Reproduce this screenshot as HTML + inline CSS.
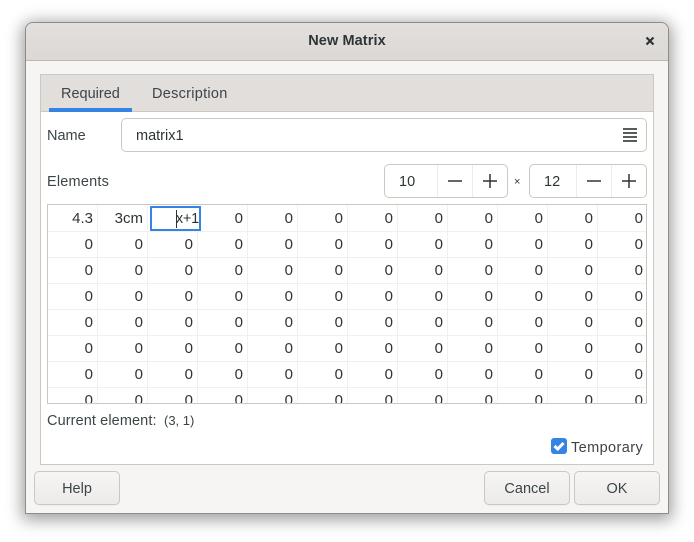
<!DOCTYPE html>
<html><head><meta charset="utf-8"><style>
html,body{margin:0;padding:0;background:#fff}
body{width:694px;height:542px;position:relative;overflow:hidden;font-family:"Liberation Sans",sans-serif;font-size:14.5px;color:#2e3436}
.a{position:absolute;box-sizing:border-box}
.t{position:absolute;white-space:nowrap;line-height:18px}
.btn{position:absolute;box-sizing:border-box;border:1px solid #cdc7c2;border-radius:5px;background:linear-gradient(#f6f5f4,#ecebe9);text-align:center;line-height:34px;color:#3d4548;box-shadow:0 1px 0 rgba(0,0,0,.03)}
.in{position:absolute;box-sizing:border-box;border:1px solid #cdc7c2;border-radius:5px;background:#fff}
.sep{position:absolute;width:1px;background:#ececec}
.c{position:absolute;width:46px;text-align:right;line-height:18px;color:#2e3436}
</style></head><body>
<div class="a" style="left:25px;top:22px;width:644px;height:492px;border:1px solid #8f8c88;border-radius:8px 8px 0 0;background:#f6f5f4;box-shadow:0 3px 16px 3px rgba(0,0,0,.38);overflow:hidden">
<div class="a" style="left:0;top:0;width:642px;height:38px;background:linear-gradient(#e2dfdc,#dcd9d5);border-bottom:1px solid #bfb8b1"></div>
</div>
<div class="t" style="left:25px;width:644px;top:32px;text-align:center;font-weight:bold;font-size:14.5px;letter-spacing:.1px;color:#2e3436">New Matrix</div>
<svg class="a" style="left:644px;top:35px" width="12" height="12" viewBox="0 0 12 12"><path d="M2.5 2.5L9.5 9.5M9.5 2.5L2.5 9.5" stroke="#2e3436" stroke-width="2.2" fill="none"/></svg>

<div class="a" style="left:40px;top:74px;width:614px;height:391px;border:1px solid #cdc7c2;background:#fff"></div>
<div class="a" style="left:41px;top:75px;width:612px;height:37px;background:#e1dedb;border-bottom:1px solid #cdc7c2"></div>
<div class="a" style="left:49px;top:108px;width:83px;height:4px;background:#3584e4"></div>
<div class="t" style="left:61px;top:85px;color:#3d4548">Required</div>
<div class="t" style="left:152px;top:85px;color:#3d4548;letter-spacing:.28px">Description</div>

<div class="t" style="left:47px;top:127px;color:#3d4548">Name</div>
<div class="in" style="left:121px;top:118px;width:526px;height:34px"></div>
<div class="t" style="left:136px;top:127px">matrix1</div>
<svg class="a" style="left:623px;top:128px" width="14" height="14" viewBox="0 0 14 14"><path d="M0 0H14V2H0ZM0 4H14V6H0ZM0 8H14V10H0ZM0 12H14V14H0Z" fill="#565b5c"/></svg>

<div class="t" style="left:47px;top:173px;letter-spacing:.2px;color:#3d4548">Elements</div>
<div class="in" style="left:384px;top:164px;width:124px;height:34px"></div>
<div class="sep" style="left:437px;top:165px;height:32px"></div>
<div class="sep" style="left:472px;top:165px;height:32px"></div>
<div class="t" style="left:399px;top:173px">10</div>
<svg class="a" style="left:447px;top:173px" width="16" height="16"><path d="M1 8H15" stroke="#2e3436" stroke-width="1.5" fill="none"/></svg>
<svg class="a" style="left:482px;top:173px" width="16" height="16"><path d="M1 8H15M8 1V15" stroke="#2e3436" stroke-width="1.5" fill="none"/></svg>
<div class="t" style="left:514px;top:173px;font-size:11px;color:#2e3436">×</div>
<div class="in" style="left:529px;top:164px;width:118px;height:34px"></div>
<div class="sep" style="left:576px;top:165px;height:32px"></div>
<div class="sep" style="left:611px;top:165px;height:32px"></div>
<div class="t" style="left:544px;top:173px">12</div>
<svg class="a" style="left:586px;top:173px" width="16" height="16"><path d="M1 8H15" stroke="#2e3436" stroke-width="1.5" fill="none"/></svg>
<svg class="a" style="left:621px;top:173px" width="16" height="16"><path d="M1 8H15M8 1V15" stroke="#2e3436" stroke-width="1.5" fill="none"/></svg>

<div class="a" style="left:47px;top:204px;width:600px;height:200px;border:1px solid #cdc7c2;background:#fff;overflow:hidden">
<script>
var h='',i,j;
for(i=1;i<12;i++)h+='<div class="sep" style="left:'+(49+50*i-50+0)+'px;top:0;height:199px;background:#f0f0ef"></div>';
for(j=1;j<8;j++)h+='<div class="a" style="left:0;width:600px;height:1px;top:'+(26*j)+'px;background:#f0f0ef"></div>';
for(j=0;j<8;j++)for(i=0;i<12;i++){
 var v='0';
 if(j==0&&i==0)v='4.3';
 if(j==0&&i==1)v='3cm';
 if(j==0&&i==2)continue;
 h+='<div class="c" style="left:'+(50*i-1)+'px;top:'+(5+26*j)+'px;font-size:15px">'+v+'</div>';
}
document.write(h);
</script>
</div>
<div class="a" style="left:150px;top:206px;width:51px;height:25px;border:2px solid #3584e4;background:#fff"></div>
<div class="t" style="left:152px;top:210px;width:47px;text-align:right;font-size:14.5px;letter-spacing:-.2px">x+1</div>
<div class="a" style="left:176px;top:210px;width:1px;height:18px;background:#2e3436"></div>

<div class="t" style="left:47px;top:412px;color:#3d4548;letter-spacing:.1px">Current element:</div>
<div class="t" style="left:164px;top:412px;color:#3d4548;font-size:13px">(3, 1)</div>

<div class="a" style="left:551px;top:438px;width:16px;height:16px;border-radius:3px;background:#3584e4"></div>
<svg class="a" style="left:551px;top:438px" width="16" height="16"><path d="M3.5 8L6.7 11L12.5 5" stroke="#fff" stroke-width="3" fill="none"/></svg>
<div class="t" style="left:571px;top:439px;color:#3d4548;letter-spacing:.4px">Temporary</div>

<div class="btn" style="left:34px;top:471px;width:86px;height:34px">Help</div>
<div class="btn" style="left:484px;top:471px;width:86px;height:34px">Cancel</div>
<div class="btn" style="left:574px;top:471px;width:86px;height:34px">OK</div>
</body></html>
